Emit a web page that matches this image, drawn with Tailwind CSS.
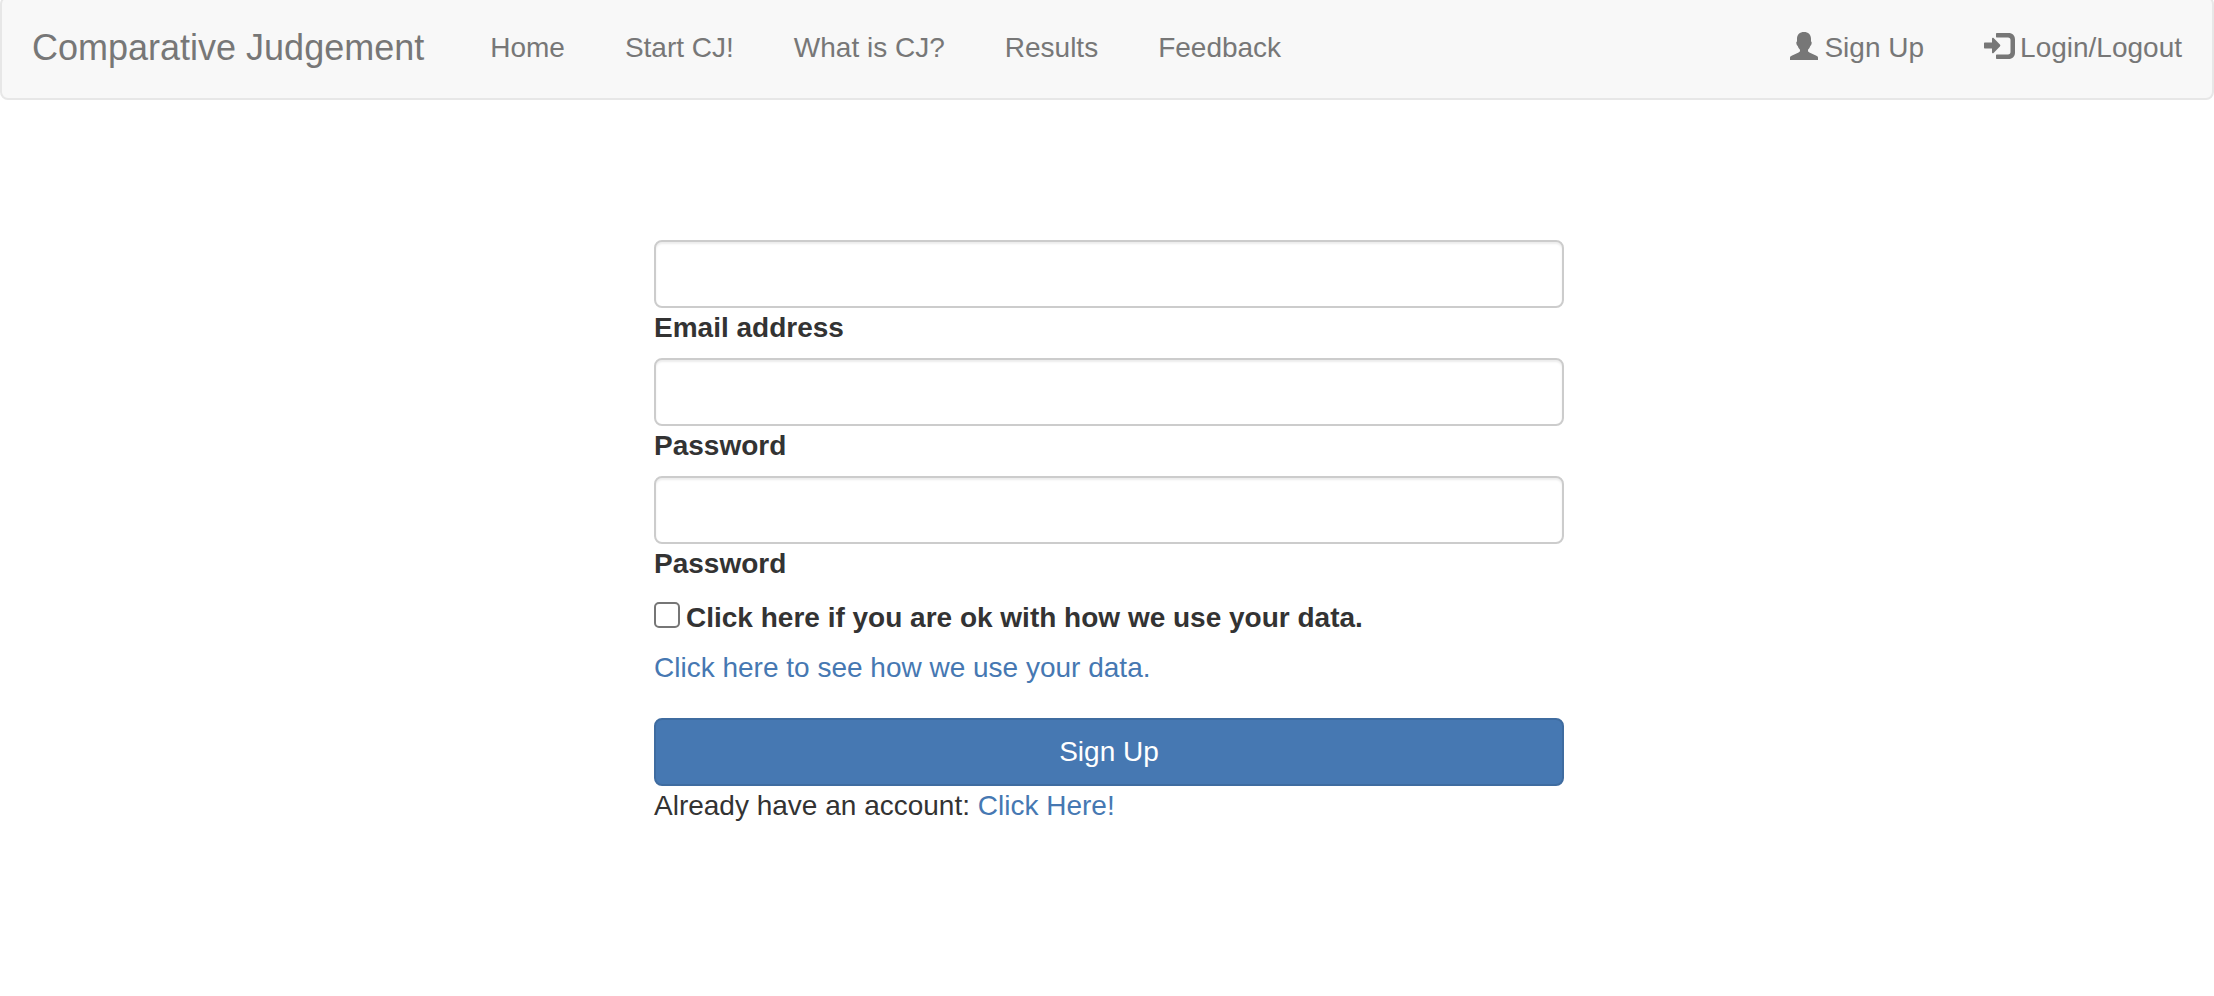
<!DOCTYPE html>
<html lang="en">
<head>
<meta charset="utf-8">
<meta name="viewport" content="width=device-width, initial-scale=1">
<title>Comparative Judgement</title>
<script src="https://cdn.jsdelivr.net/npm/@tailwindcss/browser@4"></script>
</head>
<body class="bg-white font-['Helvetica_Neue',Helvetica,'Liberation_Sans',Arial,sans-serif] text-[28px] leading-10 text-[#333333]">
<nav class="-mt-1 flex h-[104px] items-center justify-between rounded-lg border-2 border-[#e7e7e7] bg-[#f8f8f8] text-[#777777]">
  <div class="flex items-center">
    <a href="#" class="pr-9 pl-[30px] text-[36px]">Comparative Judgement</a>
    <ul class="flex items-center">
      <li><a href="#" class="block px-[30px]">Home</a></li>
      <li><a href="#" class="block px-[30px]">Start CJ!</a></li>
      <li><a href="#" class="block px-[30px]">What is CJ?</a></li>
      <li><a href="#" class="block px-[30px]">Results</a></li>
      <li><a href="#" class="block px-[30px]">Feedback</a></li>
    </ul>
  </div>
  <ul class="flex items-center">
    <li><a href="#" class="flex items-center gap-1.5 px-[30px]">
      <svg class="mb-1 h-7 w-7" viewBox="0 0 28 28" fill="currentColor" aria-hidden="true"><path d="M14 0c4.200 0 7 2.600 7 6.800v2.700c.7.300.8 1 .6 2-.2 1.200-.6 2-1.200 2.300-.5 1.600-1.300 2.900-2.400 3.900v.8c0 1 .5 1.500 1.400 1.900l7 3.300c1 .5 1.600 1 1.600 2V28H0v-2.300c0-1 .6-1.500 1.600-2l7-3.300c.9-.4 1.400-.9 1.400-1.900v-.8c-1.100-1-1.900-2.300-2.400-3.900-.6-.3-1-1.100-1.200-2.300-.2-1-.1-1.700.6-2V6.800C7 2.600 9.800 0 14 0z"/></svg>
      Sign Up</a></li>
    <li><a href="#" class="flex items-center gap-1 px-[30px]">
      <svg class="mb-1 h-7 w-8" viewBox="0 0 32 28" fill="currentColor" aria-hidden="true"><path d="M1 10.500h7V6.800c0-1.100.8-1.500 1.600-.8l6.300 6.600c.6.600.6 1.200 0 1.800l-6.300 6.600c-.8.700-1.600.3-1.600-.8v-3.700H1c-.6 0-1-.4-1-1v-4c0-.6.4-1 1-1z"/><path d="M13 1h11.500C28.500 1 31 3.500 31 7.500v13c0 4-2.500 6.500-6.500 6.500H13c-.6 0-1-.4-1-1v-2.500c0-.6.4-1 1-1h11c1.600 0 2.500-.9 2.500-2.500V8c0-1.600-.9-2.500-2.500-2.500H13c-.6 0-1-.4-1-1V2c0-.6.4-1 1-1z"/></svg>
      Login/Logout</a></li>
  </ul>
</nav>
<main class="pt-[140px] pl-1">
  <form class="mx-auto flex w-full max-w-[910px] flex-col">
    <div class="mb-2.5 flex flex-col">
      <input id="email" type="email" class="h-[68px] w-full rounded-lg border-2 border-[#cccccc] bg-white px-6 shadow-[inset_0_2px_2px_rgba(0,0,0,0.075)]">
      <label for="email" class="font-bold">Email address</label>
    </div>
    <div class="mb-2.5 flex flex-col">
      <input id="password" type="password" class="h-[68px] w-full rounded-lg border-2 border-[#cccccc] bg-white px-6 shadow-[inset_0_2px_2px_rgba(0,0,0,0.075)]">
      <label for="password" class="font-bold">Password</label>
    </div>
    <div class="mb-2.5 flex flex-col">
      <input id="password2" type="password" class="h-[68px] w-full rounded-lg border-2 border-[#cccccc] bg-white px-6 shadow-[inset_0_2px_2px_rgba(0,0,0,0.075)]">
      <label for="password2" class="font-bold">Password</label>
    </div>
    <div class="mb-2.5 flex items-end gap-1.5 pt-1">
      <input id="consent" type="checkbox" class="mb-2.5 size-[26px] appearance-none rounded-[5px] border-2 border-[#767676] bg-white checked:bg-[#4678b2]">
      <label for="consent" class="font-bold">Click here if you are ok with how we use your data.</label>
    </div>
    <a href="#" class="self-start text-[#4678b2]">Click here to see how we use your data.</a>
    <button type="submit" class="mt-[30px] h-[68px] w-full rounded-lg border-2 border-[#3f6ca0] bg-[#4678b2] text-white">Sign Up</button>
    <p>Already have an account: <a href="#" class="text-[#4678b2]">Click Here!</a></p>
  </form>
</main>
</body>
</html>
